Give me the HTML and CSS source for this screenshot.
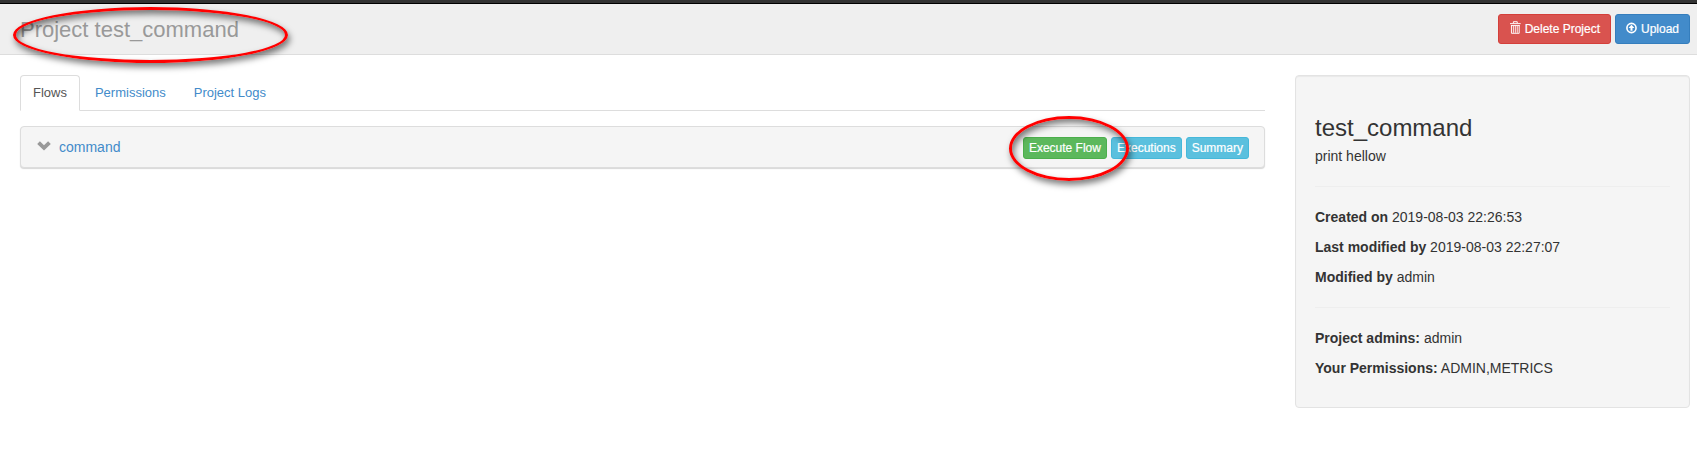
FILE: index.html
```html
<!DOCTYPE html>
<html lang="en">
<head>
<meta charset="utf-8">
<title>Project test_command</title>
<link rel="stylesheet" href="styles.css">
</head>
<body>
<div class="navbar-edge"></div>
<header class="page-header">
  <h1>Project test_command</h1>
  <div class="actions">
    <button class="btn btn-sm btn-danger"><svg class="icon" width="11" height="13" viewBox="0 0 11 13"><path d="M3.5 2V.5h4V2M0 2.5h11M1.5 4v8.5h8V4" fill="none" stroke="#fff"/><path d="M1 4.5h9" stroke="#fff"/><path d="M3.5 5v7M5.5 5v7M7.5 5v7" stroke="#fff" stroke-width=".9"/></svg>Delete Project</button>
    <button class="btn btn-sm btn-primary"><svg class="icon" width="12" height="12" viewBox="0 0 12 12"><circle cx="6" cy="6" r="5" fill="none" stroke="#fff" stroke-width="1.8"/><path d="M6 2.5 9.2 6H7.1V9H4.9V6H2.8z" fill="#fff"/></svg>Upload</button>
  </div>
</header>
<main class="content">
  <section class="flows">
    <ul class="tabs">
      <li class="active">Flows</li>
      <li>Permissions</li>
      <li>Project Logs</li>
    </ul>
    <div class="panel">
      <svg class="chevron" width="14" height="10" viewBox="0 0 14 10"><path d="M.2 3 2.9.3 7 4.2 11.1.3 13.8 3 7 9.5z" fill="#999"/></svg>
      <a class="flow-name">command</a>
      <div class="flow-actions">
        <button class="btn btn-xs btn-success">Execute Flow</button>
        <button class="btn btn-xs btn-info">Executions</button>
        <button class="btn btn-xs btn-info">Summary</button>
      </div>
    </div>
  </section>
  <aside class="well">
    <h2>test_command</h2>
    <p>print hellow</p>
    <hr>
    <p><strong>Created on</strong> 2019-08-03 22:26:53</p>
    <p><strong>Last modified by</strong> 2019-08-03 22:27:07</p>
    <p><strong>Modified by</strong> admin</p>
    <hr>
    <p><strong>Project admins:</strong> admin</p>
    <p><strong>Your Permissions:</strong> ADMIN,METRICS</p>
  </aside>
</main>
<div class="marker marker-title"></div>
<div class="marker marker-execute"></div>
</body>
</html>
```
FILE: styles.css
```css
* { box-sizing: border-box; }
body {
  margin: 0;
  height: 459px;
  overflow: hidden;
  background: #fff;
  color: #333;
  font: 14px/20px "Liberation Sans", Arial, sans-serif;
}
.navbar-edge { height: 4px; background: #333; border-bottom: 1px solid #000; }
.page-header {
  display: flex;
  justify-content: space-between;
  height: 51px;
  padding: 10px 7px 0 20px;
  background: #efefef;
  border-bottom: 1px solid #ddd;
}
h1 { margin: 4px 0 0; font-size: 22px; line-height: 24px; font-weight: 400; color: #999; }
.actions, .flow-actions { display: flex; gap: 4px; }
.btn {
  display: flex;
  align-items: center;
  border: 1px solid;
  border-radius: 3px;
  color: #fff;
  font: 12px/18px "Liberation Sans", Arial, sans-serif;
  white-space: nowrap;
  -webkit-text-stroke: .2px #fff;
}
.btn-sm { height: 30px; padding: 0 10px; }
.btn-xs { height: 22px; padding: 0 5px; }
.btn-danger { width: 113px; padding-left: 11px; background: #d9534f; border-color: #d43f3a; }
.btn-primary { width: 75px; background: #428bca; border-color: #357ebd; }
.btn-success { background: #5cb85c; border-color: #4cae4c; }
.btn-info { background: #5bc0de; border-color: #46b8da; }
.btn-danger .icon { margin: 0 4px 3px 0; }
.btn-primary .icon { margin: 0 4px 2px 0; }
.content { display: flex; gap: 30px; padding: 20px 7px 0 20px; }
.flows { flex: 1; }
.tabs {
  display: flex;
  gap: 2px;
  height: 36px;
  margin: 0 0 15px;
  padding: 0;
  list-style: none;
  border-bottom: 1px solid #ddd;
  font-size: 13px;
}
.tabs li { height: 36px; padding: 7px 12px 0; border: 1px solid transparent; color: #428bca; }
.tabs .active {
  background: #fff;
  border-color: #ddd #ddd #fff;
  border-radius: 4px 4px 0 0;
  color: #555;
}
.panel {
  display: flex;
  height: 42px;
  padding: 10px 15px 0 16px;
  background: #f5f5f5;
  border: 1px solid #ddd;
  border-radius: 4px;
  box-shadow: 0 1px 1px rgba(0, 0, 0, .16);
}
.chevron { margin: 4px 8px 0 0; }
.flow-name { color: #428bca; }
.flow-actions { margin-left: auto; }
.well {
  width: 395px;
  height: 333px;
  padding: 19px;
  background: #f5f5f5;
  border: 1px solid #e3e3e3;
  border-radius: 4px;
  box-shadow: inset 0 1px 1px rgba(0, 0, 0, .05);
}
.well h2 { margin: 20px 0 5px; font-size: 24px; line-height: 26px; font-weight: 400; }
.well p { margin: 0 0 10px; }
.well hr { height: 1px; margin: 20px 0; border: 0; background: #eee; }
.marker {
  position: absolute;
  border: 3px solid #f00;
  border-radius: 50%;
  box-shadow: 2px 4px 6px rgba(0, 0, 0, .5), inset 2px 4px 6px rgba(0, 0, 0, .5);
}
.marker-title { left: 13px; top: 7px; width: 275px; height: 56px; }
.marker-execute { left: 1009px; top: 116px; width: 120px; height: 65px; }
```
